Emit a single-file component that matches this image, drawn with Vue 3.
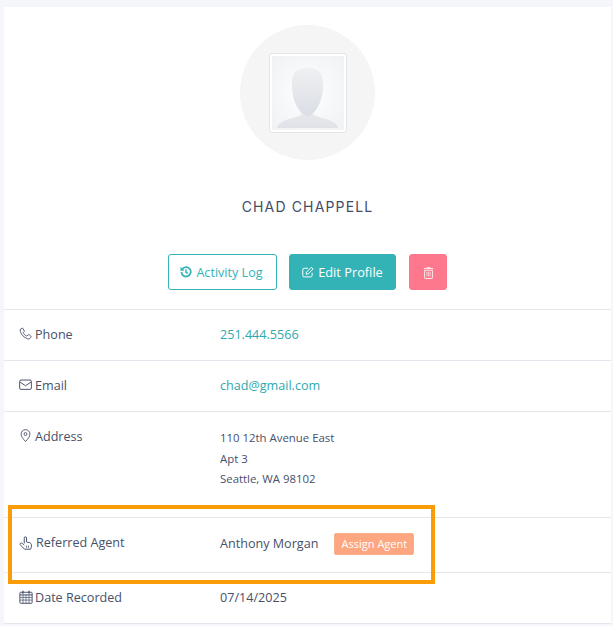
<script setup>
const rows = [
  { key: 'phone', label: 'Phone', value: '251.444.5566', link: true },
  { key: 'email', label: 'Email', value: 'chad@gmail.com', link: true },
  { key: 'address', label: 'Address', lines: ['110 12th Avenue East', 'Apt 3', 'Seattle, WA 98102'] },
  { key: 'agent', label: 'Referred Agent', value: 'Anthony Morgan', assign: true },
  { key: 'date', label: 'Date Recorded', value: '07/14/2025' },
]
</script>

<template>
  <div class="page">
    <div class="card">
      <div class="head">
        <div class="avatar">
          <div class="photo">
            <svg viewBox="0 0 72 74" width="72" height="74">
              <defs>
                <linearGradient id="face" x1="0" y1="0" x2="0" y2="1">
                  <stop offset="0" stop-color="#eff0f2" />
                  <stop offset="1" stop-color="#dadee5" />
                </linearGradient>
                <linearGradient id="body" x1="0" y1="0" x2="0" y2="1">
                  <stop offset="0" stop-color="#e6e8ec" />
                  <stop offset="1" stop-color="#e0e2e7" />
                </linearGradient>
                <radialGradient id="bg" cx="0.5" cy="0.5" r="0.72">
                  <stop offset="0" stop-color="#ffffff" />
                  <stop offset="1" stop-color="#eff1f3" />
                </radialGradient>
              </defs>
              <rect width="72" height="74" fill="url(#bg)" />
              <path d="M5 72c1-5 6-7 12-9 6-1.500 11-3 13-5h11c2 2 7 3.500 13 5 6 2 11 4 12 9z" fill="url(#body)" />
              <path d="M35.500 12c-11 0-15.500 5-15.500 15 0 5 0 9 1 12 1 9 8.500 21 14.500 21s13.500-12 14.500-21c1-3 1-7 1-12 0-10-4.500-15-15.500-15z" fill="url(#face)" />
            </svg>
          </div>
        </div>
        <h1 class="name">CHAD CHAPPELL</h1>
        <div class="actions">
          <button class="btn outline">
            <svg class="bi" viewBox="0 0 16 16"><path d="M3 4.200A6.200 6.200 0 1 1 1.900 8" fill="none" stroke="currentColor" stroke-width="2.400" /><path d="M.6 1v5.400H6z" fill="currentColor" /><path d="M8 4.500V8.300l2.500 1.500" fill="none" stroke="currentColor" stroke-width="2" /></svg>
            Activity Log
          </button>
          <button class="btn solid">
            <svg class="bi" viewBox="0 0 16 16"><path d="M13.500 9v3.500a2 2 0 0 1-2 2H3a2 2 0 0 1-2-2V5a2 2 0 0 1 2-2h5" fill="none" stroke="currentColor" stroke-width="1.300" /><path d="M6 8.200 12.500 1.700l2.300 2.300-6.500 6.500-2.800.5z" fill="none" stroke="currentColor" stroke-width="1.300" stroke-linejoin="round" /></svg>
            Edit Profile
          </button>
          <button class="btn danger" aria-label="Delete">
            <svg class="ti" viewBox="0 0 14 16"><path d="M5 1h4l.6 1.300H13v1.400H1V2.300h3.400z" fill="currentColor" /><path d="M2 5h10v9a1.500 1.500 0 0 1-1.500 1.500h-7A1.500 1.500 0 0 1 2 14z" fill="none" stroke="currentColor" stroke-width="1.300" /><path d="M5 7v6M7 7v6M9 7v6" stroke="currentColor" stroke-width="1" /></svg>
          </button>
        </div>
      </div>

      <div v-for="row in rows" :key="row.key" class="row" :class="'row-' + row.key">
        <div class="label">
          <svg v-if="row.key === 'phone'" class="ico" viewBox="0 0 16 16"><path d="M2 2.500 4.300 1.200 6.800 5.300 5.200 6.800c.8 2 2.400 3.600 4.400 4.400l1.400-1.500c.5-.4 1.200-.4 1.800 0l1.500 1.200c.6.500.6 1.300.2 1.900l-.6.900c-.6.900-1.800 1.300-3.100.9C6 13 2.800 9.500 1.600 5.300 1.200 4 1.300 3 2 2.500z" fill="none" stroke="currentColor" stroke-width="1.100" stroke-linejoin="round" /></svg>
          <svg v-else-if="row.key === 'email'" class="ico" viewBox="0 0 16 16"><rect x=".8" y="2.500" width="14.400" height="11.500" rx="1.600" fill="none" stroke="currentColor" stroke-width="1.200" /><path d="M1.200 5 8 9.500 14.800 5" fill="none" stroke="currentColor" stroke-width="1.200" /></svg>
          <svg v-else-if="row.key === 'address'" class="ico" viewBox="0 0 16 16"><path d="M8 15.400C4.600 11.800 2.600 9 2.600 6.200a5.400 5.400 0 0 1 10.800 0c0 2.800-2 5.600-5.400 9.200z" fill="none" stroke="currentColor" stroke-width="1.100" /><circle cx="8" cy="6.200" r="1.800" fill="none" stroke="currentColor" stroke-width="1.100" /></svg>
          <svg v-else-if="row.key === 'agent'" class="ico big" viewBox="0 0 16 16"><path d="M6 8.500V2.200a1.300 1.300 0 0 1 2.600 0V6.800l3.600.9c1.200.3 2 1.200 2 2.400v1.500c0 1.200-.4 2.300-1 3.500H6.300L1.800 10.400c-.7-.8-.7-1.600-.1-2.100.7-.5 1.600-.3 2.300.3L6 10.400" fill="none" stroke="currentColor" stroke-width="1.100" stroke-linejoin="round" /><path d="M8.500 11v2.500M10.800 11v2.500" stroke="currentColor" stroke-width=".9" /></svg>
          <svg v-else class="ico big cal" viewBox="0 0 16 16"><rect x="1" y="2.600" width="14" height="12.600" rx="1" fill="none" stroke="currentColor" stroke-width="1.100" /><path d="M4.500 .8v3.400M11.500 .8v3.400" stroke="currentColor" stroke-width="1.500" /><path d="M1 5.600h14" stroke="currentColor" stroke-width="1.200" /><path d="M1 8.500h14M1 11.500h14M4.600 5.600v9.600M8 5.600v9.600M11.400 5.600v9.600" stroke="currentColor" stroke-width=".8" /></svg>
          <span>{{ row.label }}</span>
        </div>
        <div class="value" :class="{ link: row.link }">
          <template v-if="row.lines">
            <div v-for="line in row.lines" :key="line" class="line">{{ line }}</div>
          </template>
          <template v-else>
            <span>{{ row.value }}</span>
            <span v-if="row.assign" class="assign">Assign Agent</span>
          </template>
        </div>
      </div>

      <div class="highlight"></div>
    </div>
  </div>
</template>

<style>
html, body { margin: 0; background: #f4f6fb; }
</style>

<style scoped>
.page {
  width: 613px;
  height: 626px;
  overflow: hidden;
  padding: 7px 0 0 4px;
  box-sizing: border-box;
  font-family: "Open Sans", "Liberation Sans", sans-serif;
  color: #475069;
}
.card {
  position: relative;
  background: #fff;
  height: 617px;
  width: 607px;
}
.head {
  height: 302px;
  box-sizing: border-box;
  padding-top: 18px;
  display: flex;
  flex-direction: column;
  align-items: center;
}
.avatar {
  width: 135px;
  height: 135px;
  border-radius: 50%;
  background: #f5f5f6;
  display: flex;
  align-items: center;
  justify-content: center;
  flex: none;
}
.photo {
  width: 72px;
  height: 74px;
  border: 2px solid #fff;
  box-shadow: 0 0 0 1px #e4e5e7;
  border-radius: 3px;
  overflow: hidden;
  display: flex;
}
.name {
  margin: 37px 0 0;
  font-family: Inter, "Liberation Sans", sans-serif;
  font-size: 14px;
  font-weight: 400;
  letter-spacing: 1.150px;
  line-height: 20px;
  color: #434d68;
}
.actions {
  margin-top: 37px;
  display: flex;
  gap: 12px;
}
.btn {
  height: 36px;
  box-sizing: border-box;
  border-radius: 3px;
  font-family: inherit;
  font-size: 12.600px;
  font-weight: 400;
  display: flex;
  align-items: center;
  justify-content: center;
  gap: 4px;
  padding: 0;
  border: 1px solid #34b3b7;
}
.outline { width: 109px; background: #fff; color: #34b3b7; padding-right: 2px; }
.solid { width: 107px; background: #34b3b7; color: #fff; font-weight: 500; font-size: 12.800px; }
.danger { width: 38px; margin-left: 1px; background: #fd788c; border-color: #fd788c; color: #fff; }
.bi { width: 12px; height: 12px; flex: none; }
.ti { width: 11px; height: 13px; flex: none; opacity: .8; }
.row {
  display: flex;
  border-bottom: 1px solid #e4e6ee;
  box-sizing: border-box;
  height: 51px;
  font-size: 12.600px;
}
.row-phone { border-top: 1px solid #e4e6ee; height: 52px; }
.row-address { height: 106px; }
.row-agent { height: 55px; align-items: center; }
.label {
  width: 216px;
  padding: 16px 0 0 15px;
  box-sizing: border-box;
  display: flex;
  align-items: flex-start;
  gap: 3px;
  line-height: 18px;
  flex: none;
}
.row-agent .label { padding-top: 0; margin-top: -5px; }
.ico { width: 13px; height: 13px; flex: none; margin-top: 1px; }
.ico.big { width: 14px; height: 14px; margin-top: 2px; }
.ico.cal { margin-right: -1px; margin-top: 1px; }
.value { padding-top: 16px; line-height: 18px; }
.row-agent .value { padding-top: 0; margin-top: -2px; display: flex; align-items: center; }
.link { color: #2ea9ad; }
.row-address .value { padding-top: 16px; font-size: 11.400px; }
.line { line-height: 20.500px; }
.assign {
  margin-left: 16px;
  height: 22px;
  width: 80px;
  box-sizing: border-box;
  border: 1px solid #fbb08c;
  background: #fda680;
  color: #fff;
  border-radius: 2px;
  font-size: 11px;
  font-weight: 500;
  display: flex;
  align-items: center;
  justify-content: center;
}
.highlight {
  position: absolute;
  left: 4px;
  top: 498px;
  width: 427px;
  height: 79px;
  box-sizing: border-box;
  border: 4px solid #fa9b08;
  pointer-events: none;
}
</style>
